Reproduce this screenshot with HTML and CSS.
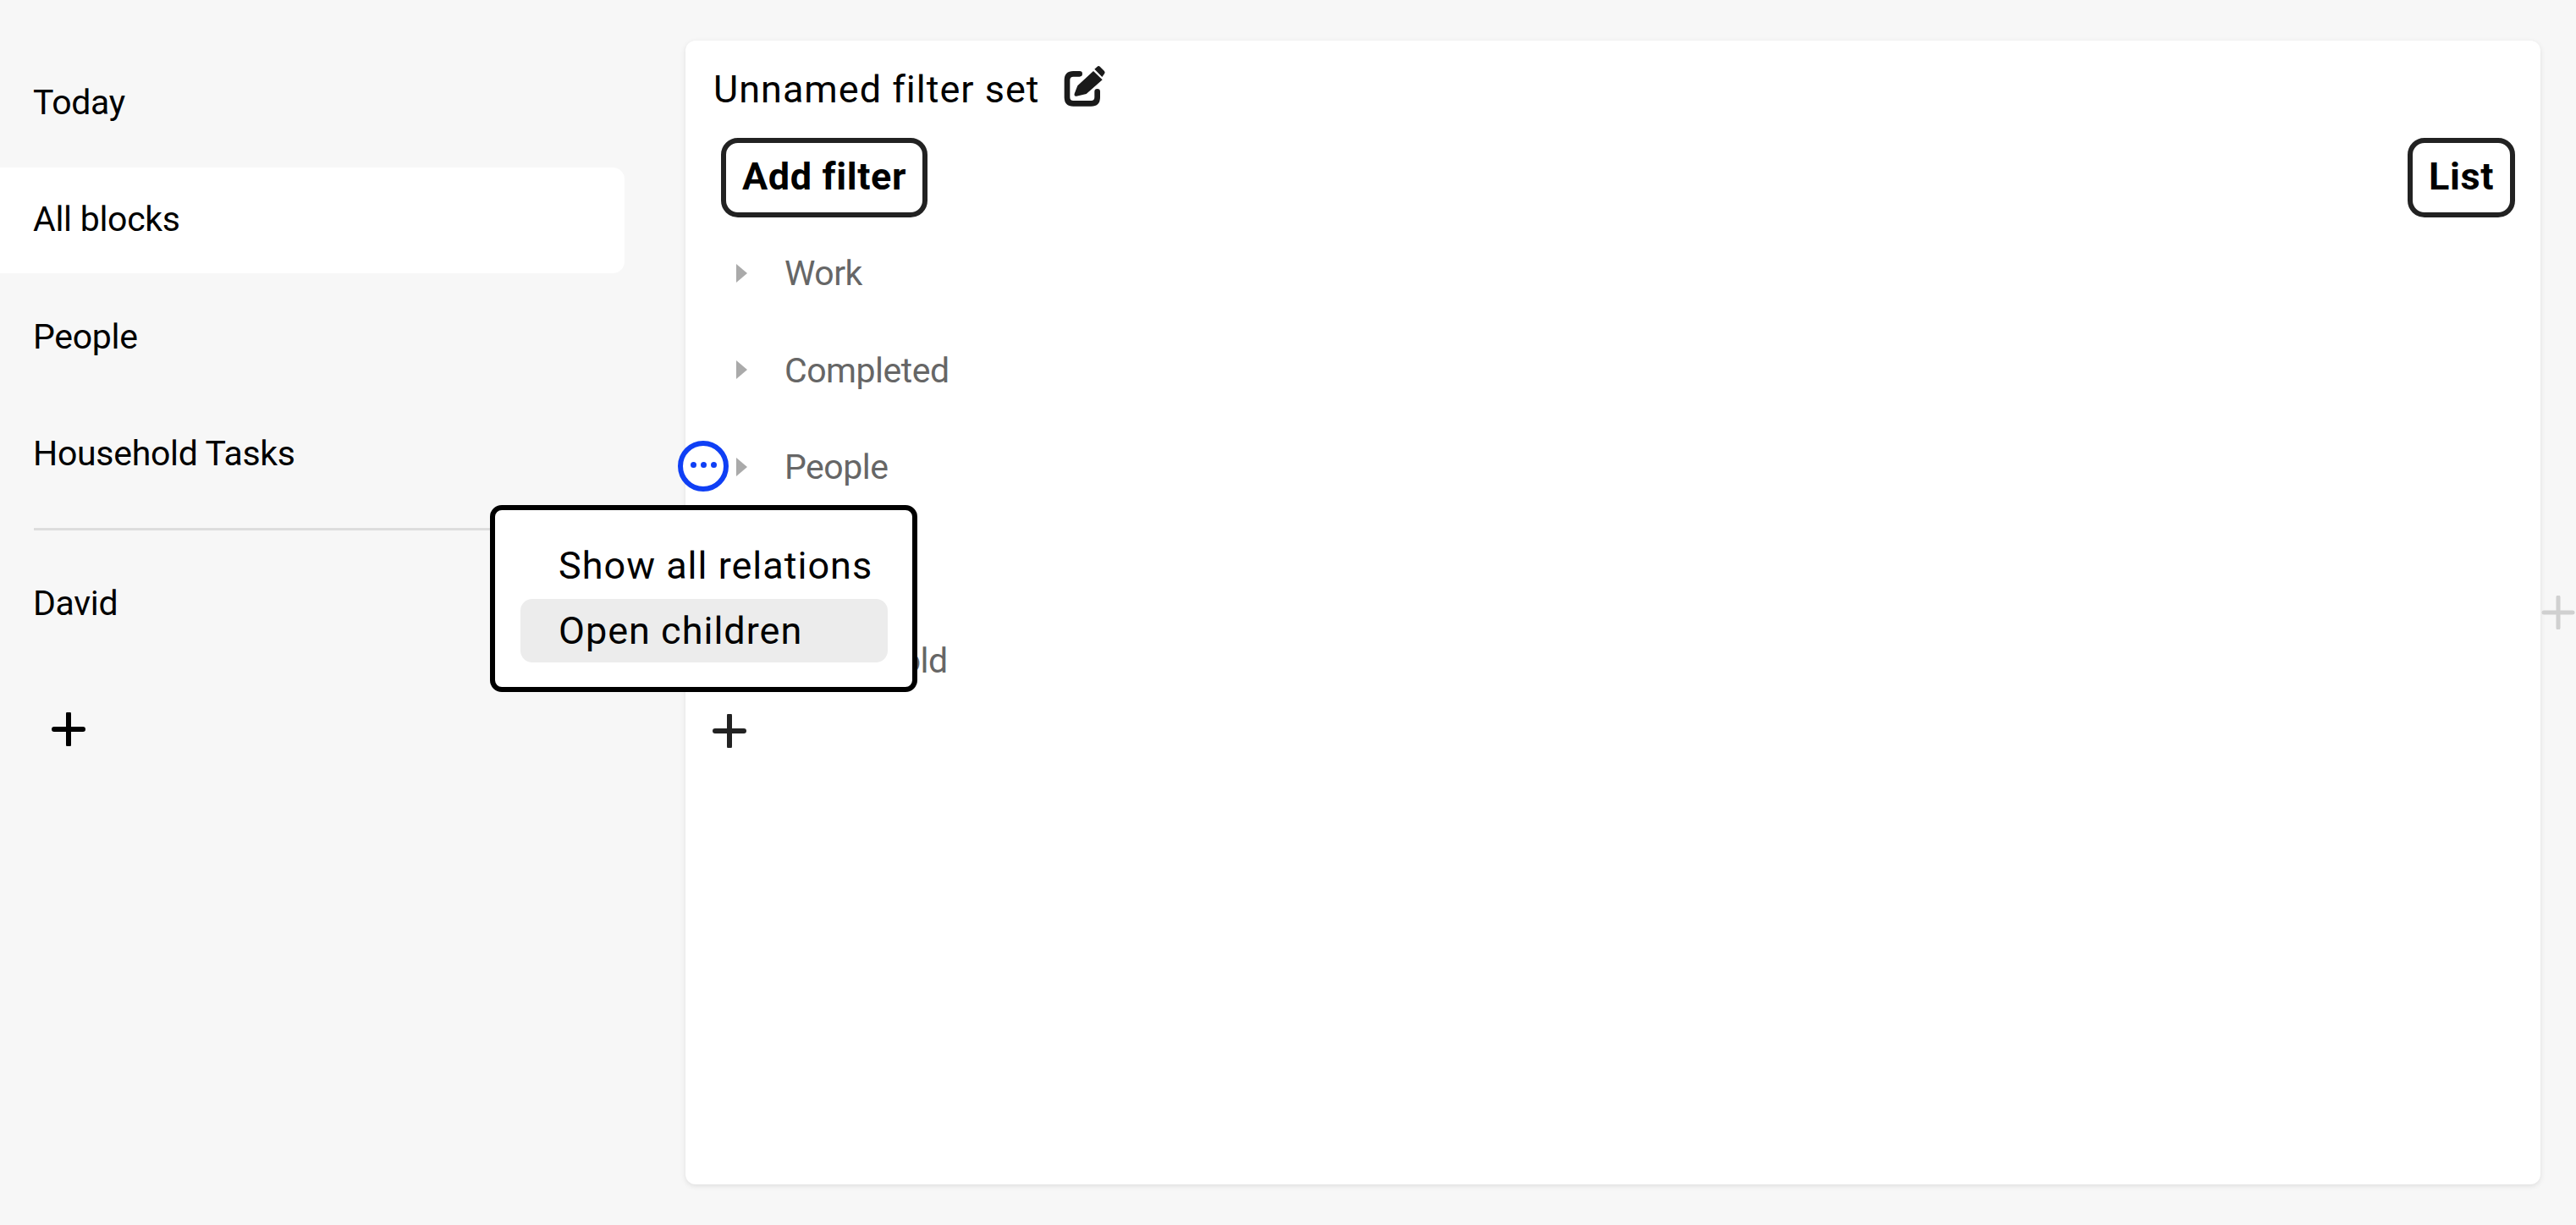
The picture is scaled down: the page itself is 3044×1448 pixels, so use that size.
FILE: index.html
```html
<!DOCTYPE html>
<html lang="en">
<head>
<meta charset="utf-8">
<title>All blocks</title>
<link rel="stylesheet" href="styles.css">
</head>
<body>
<aside class="sidebar">
  <nav class="nav">
    <a class="nav-item">Today</a>
    <a class="nav-item is-active">All blocks</a>
    <a class="nav-item">People</a>
    <a class="nav-item">Household Tasks</a>
  </nav>
  <div class="divider"></div>
  <a class="nav-item nav-item-user">David</a>
  <svg class="plus plus-side" viewBox="0 0 40 40"><path d="M3 20H37M20 2V38"/></svg>
</aside>
<main class="card">
  <header class="title-row">
    <h1 class="title">Unnamed filter set</h1>
    <svg class="edit-icon" viewBox="0 0 300 270">
      <path class="edit-box" d="M107 85H85Q63 85 63 107V168Q63 190 85 190H148Q170 190 170 168V148"/>
      <path class="edit-pen" d="M90 163Q88 160 89 155L100 127L156 75L188 106L131 156L96 164Q92 165 90 163Z"/>
      <path class="edit-pen" d="M160 68L170 59Q175 55 180 60L195 75Q199 80 195 85L187 96Z"/>
    </svg>
  </header>
  <div class="toolbar">
    <button class="btn">Add filter</button>
    <button class="btn btn-list">List</button>
  </div>
  <ul class="filters">
    <li class="filter"><span class="caret"></span><span class="filter-label">Work</span></li>
    <li class="filter"><span class="caret"></span><span class="filter-label">Completed</span></li>
    <li class="filter filter-open">
      <span class="dots-btn"><i></i><i></i><i></i></span>
      <span class="caret"></span><span class="filter-label">People</span>
      <div class="menu">
        <div class="menu-item">Show all relations</div>
        <div class="menu-item is-hover">Open children</div>
      </div>
    </li>
    <li class="filter"><span class="caret"></span></li>
    <li class="filter"><span class="caret"></span><span class="filter-label">Household</span></li>
  </ul>
  <svg class="plus plus-main" viewBox="0 0 40 40"><path d="M3 20H37M20 2V38"/></svg>
</main>
<svg class="plus plus-pane" viewBox="0 0 40 40"><path d="M3 20H37M20 2V38"/></svg>
</body>
</html>
```

FILE: styles.css
```css
* { box-sizing: border-box; }
html, body { margin: 0; height: 1448px; }
body {
  position: relative;
  display: flex;
  align-items: flex-start;
  overflow: hidden;
  background: #f7f7f7;
  color: #000;
  font-family: Roboto, "Noto Sans", sans-serif;
  font-size: 41px;
}
.sidebar { width: 810px; flex: none; padding-top: 59px; }
.nav { display: flex; flex-direction: column; gap: 13.5px; }
.nav-item {
  display: flex;
  align-items: center;
  width: 738px;
  height: 125px;
  padding: 0 0 2px 39px;
  border-radius: 0 14px 14px 0;
  letter-spacing: -.3px;
}
.nav-item.is-active { background: #fff; }
.divider { width: 698px; height: 3px; margin: 24.5px 0 24px 40px; background: #ddd; }
.plus { display: block; width: 40px; height: 40px; fill: none; stroke: #000; stroke-width: 6; stroke-linecap: round; }
.plus-side { margin: 66px 0 0 61px; }
.card {
  width: 2192px;
  height: 1352px;
  flex: none;
  margin-top: 48px;
  padding-top: 26px;
  background: #fff;
  border-radius: 12px;
  box-shadow: 0 2px 6px rgba(0, 0, 0, .1);
}
.title-row { display: flex; align-items: center; height: 60px; padding-left: 33px; }
.title { margin: 4px 0 0; font-size: 45px; font-weight: 400; line-height: 56px; letter-spacing: 1px; }
.edit-icon { width: 100px; height: 90px; margin-left: 11px; flex: none; }
.edit-box { fill: none; stroke: #1a1a1a; stroke-width: 20; stroke-linecap: round; }
.edit-pen { fill: #1a1a1a; }
.toolbar { display: flex; justify-content: space-between; margin: 29px 30px 0 42px; }
.btn {
  height: 94px;
  padding: 0 19px 3px;
  background: #fff;
  border: 6px solid #222;
  border-radius: 20px;
  color: #000;
  font: 700 45px Roboto, "Noto Sans", sans-serif;
  letter-spacing: .6px;
}
.filters { margin: 8.5px 0 0; padding: 0; list-style: none; }
.filter {
  position: relative;
  display: flex;
  align-items: center;
  height: 114.5px;
  padding-left: 60px;
  color: #666;
  letter-spacing: -.5px;
}
.caret {
  flex: none;
  width: 0;
  height: 0;
  border-style: solid;
  border-width: 11px 0 11px 13px;
  border-color: transparent transparent transparent #aaa;
}
.filter-label { margin: 1px 0 0 44px; }
.dots-btn {
  position: absolute;
  left: -9px;
  top: 26.5px;
  display: flex;
  align-items: center;
  justify-content: center;
  gap: 5px;
  width: 60px;
  height: 60px;
  padding-bottom: 4px;
  background: #fff;
  border: 6px solid #0f3ff5;
  border-radius: 50%;
}
.dots-btn i { width: 7px; height: 7px; border-radius: 50%; background: #0f3ff5; }
.menu {
  position: absolute;
  left: -231px;
  top: 102.5px;
  z-index: 2;
  display: flex;
  flex-direction: column;
  gap: 2px;
  width: 505px;
  height: 221px;
  padding: 28px 29px 29px 30px;
  background: #fff;
  border: 6px solid #000;
  border-radius: 14px;
  color: #000;
  font-size: 45px;
  letter-spacing: 1px;
}
.menu-item {
  display: flex;
  align-items: center;
  height: 75px;
  padding: 0 0 1px 45px;
  border-radius: 14px;
}
.menu-item.is-hover { background: #ececec; }
.plus-main { margin: 6px 0 0 32px; stroke: #222; }
.plus-pane { position: absolute; left: 3003px; top: 704px; stroke: #d0d0d0; stroke-width: 5; }
```
